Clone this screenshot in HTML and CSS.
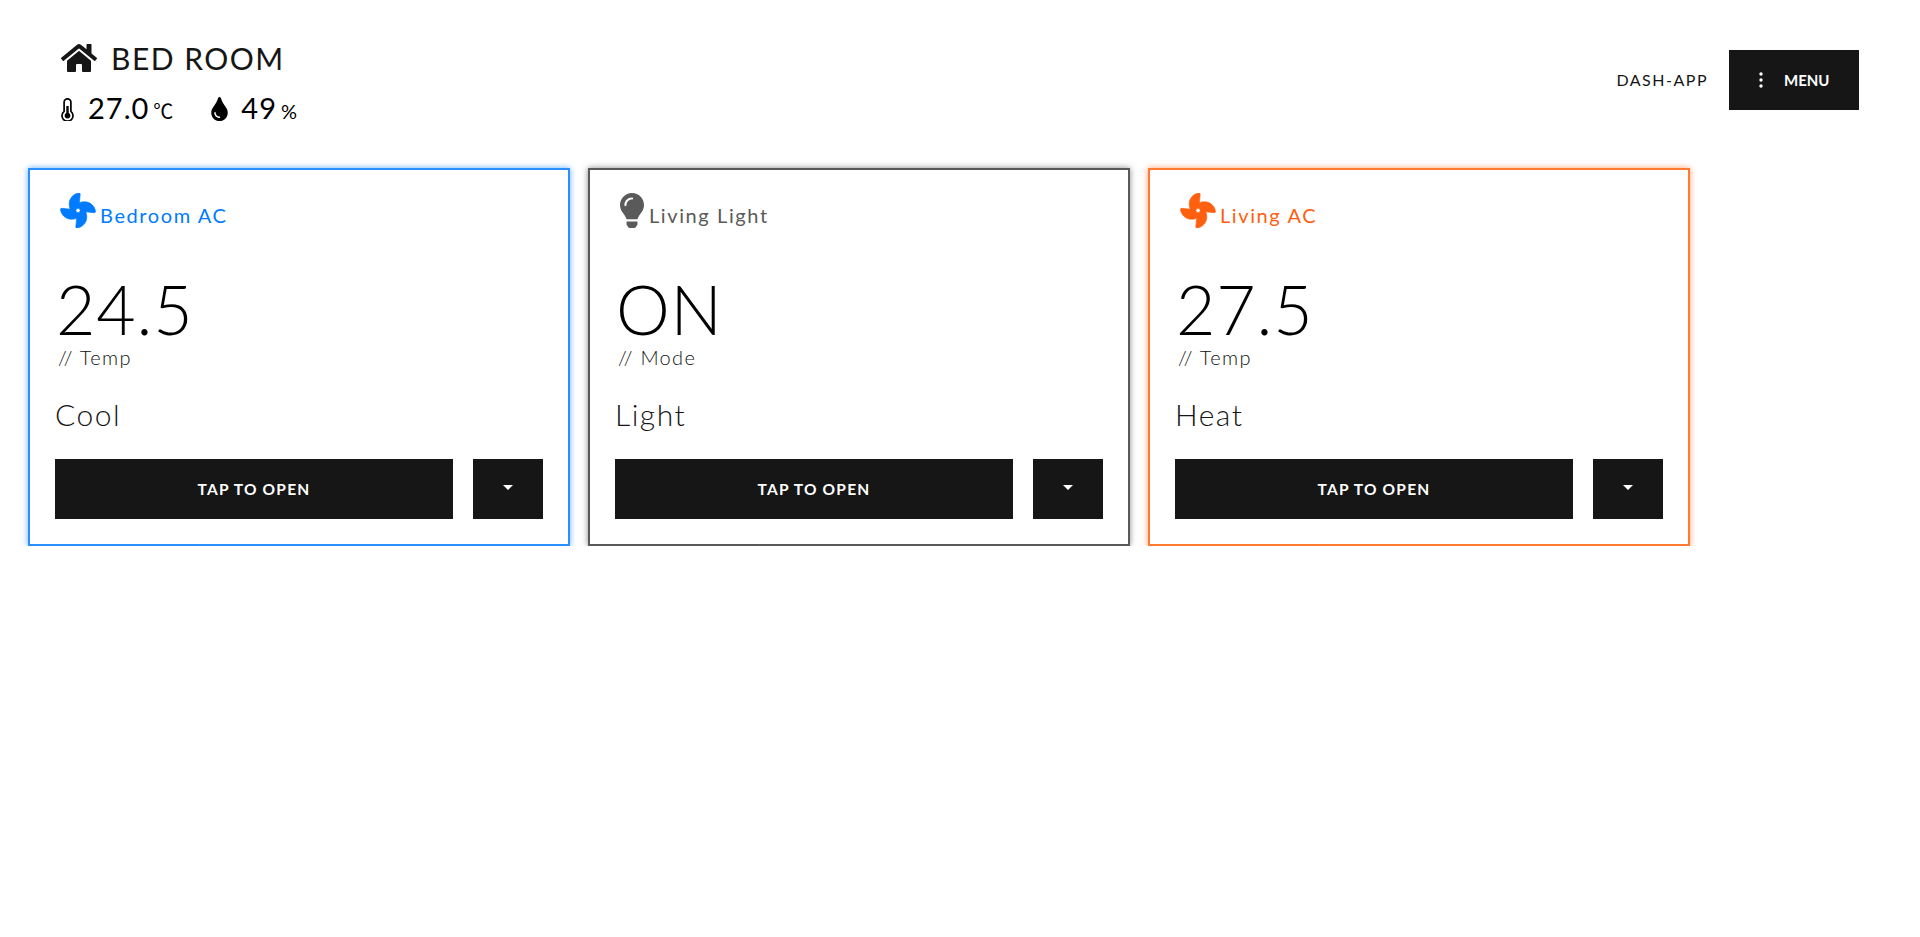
FILE: index.html
```html
<!DOCTYPE html>
<html lang="en">
<head>
  <meta charset="UTF-8" />
  <meta name="viewport" content="width=device-width, initial-scale=1.0"/>
  <title>Bed Room - Dash App</title>
  <link rel="stylesheet" href="styles.css">
</head>
<body>
  <svg class="icon-defs" width="0" height="0" aria-hidden="true">
    <symbol id="icon-fan" viewBox="0 0 512 512">
      <path stroke="currentColor" stroke-width="10" d="M352.57 128c-28.09 0-54.09 4.52-77.06 12.86l12.41-123.11C289 7.31 279.81-1.18 269.33.13 189.63 10.13 128 77.64 128 159.43c0 28.09 4.52 54.09 12.86 77.06L17.75 224.08C7.31 223-1.18 232.19.13 242.67c10 79.7 77.51 141.33 159.3 141.33 28.09 0 54.09-4.52 77.06-12.86l-12.41 123.11c-1.05 10.43 8.11 18.93 18.59 17.62 79.7-10 141.33-77.51 141.33-159.3 0-28.09-4.52-54.09-12.86-77.06l123.11 12.41c10.44 1.05 18.93-8.11 17.62-18.59-10-79.7-77.51-141.33-159.3-141.33zM256 288a32 32 0 1 1 0-64 32 32 0 0 1 0 64z"/>
    </symbol>
    <symbol id="icon-bulb" viewBox="0 0 352 512">
      <path d="M96.06 454.35c.01 6.29 1.87 12.45 5.36 17.69l17.09 25.69a31.99 31.99 0 0 0 26.64 14.28h61.71a31.99 31.99 0 0 0 26.64-14.28l17.09-25.69a31.989 31.989 0 0 0 5.36-17.69l.04-38.35H96.01l.05 38.35zM0 176c0 44.37 16.45 84.85 43.56 115.78 16.52 18.85 42.36 58.23 52.21 91.45.04.26.07.52.11.78h160.24c.04-.26.07-.51.11-.78 9.85-33.22 35.69-72.6 52.21-91.45C335.55 260.85 352 220.37 352 176 352 78.61 272.91-.3 175.45 0 73.44.31 0 82.97 0 176zm176-80c-44.11 0-80 35.89-80 80 0 8.84-7.16 16-16 16s-16-7.16-16-16c0-61.76 50.24-112 112-112 8.84 0 16 7.16 16 16s-7.16 16-16 16z"/>
    </symbol>
  </svg>

  <div class="header">
    <div class="room">
      <h1 class="room-title">
        <svg class="icon-home" viewBox="0 0 576 512"><path d="M280.37 148.26L96 300.11V464a16 16 0 0 0 16 16l112.06-.29a16 16 0 0 0 15.92-16V368a16 16 0 0 1 16-16h64a16 16 0 0 1 16 16v95.64a16 16 0 0 0 16 16.05L464 480a16 16 0 0 0 16-16V300L295.67 148.26a12.19 12.19 0 0 0-15.3 0zM571.6 251.47L488 182.56V44.05a12 12 0 0 0-12-12h-56a12 12 0 0 0-12 12v72.61L318.47 43a48 48 0 0 0-61 0L4.34 251.47a12 12 0 0 0-1.6 16.9l25.5 31A12 12 0 0 0 45.15 301l235.22-193.74a12.19 12.19 0 0 1 15.3 0L530.9 301a12 12 0 0 0 16.9-1.6l25.5-31a12 12 0 0 0-1.7-16.93z"/></svg>
        BED ROOM
      </h1>
      <div class="room-stats">
        <div class="stat stat-temp">
          <svg class="icon-thermo" viewBox="0 0 13 23">
            <path class="thermo-outline" d="M3.1 13.4V4.2a3.4 3.4 0 0 1 6.8 0v9.2a5.5 5.5 0 1 1-6.8 0z"/>
            <path d="M5.3 8h2.4v7a2.9 2.9 0 1 1-2.4 0z"/>
          </svg>
          <span class="stat-value">27.0</span>
          <span class="stat-unit">℃</span>
        </div>
        <div class="stat">
          <svg class="icon-drop" viewBox="0 0 352 512"><path d="M205.22 22.09c-7.94-28.78-49.44-30.12-58.44 0C100.01 179.85 0 222.72 0 333.91 0 432.35 78.72 512 176 512s176-79.65 176-178.09c0-111.75-99.79-153.34-146.78-311.82zM176 448c-61.75 0-112-50.25-112-112 0-8.84 7.16-16 16-16s16 7.16 16 16c0 44.11 35.89 80 80 80 8.84 0 16 7.16 16 16s-7.16 16-16 16z"/></svg>
          <span class="stat-value">49</span>
          <span class="stat-unit">%</span>
        </div>
      </div>
    </div>
    <div class="nav">
      <span class="nav-label">DASH-APP</span>
      <button class="btn btn-menu">
        <svg class="icon-dots" viewBox="0 0 4 16"><circle cx="2" cy="2" r="1.7"/><circle cx="2" cy="8" r="1.7"/><circle cx="2" cy="14" r="1.7"/></svg>
        MENU
      </button>
    </div>
  </div>

  <div class="cards">
    <div class="card card-blue">
      <div class="card-title">
        <svg class="icon-fan"><use href="#icon-fan"/></svg>
        <span>Bedroom AC</span>
      </div>
      <div class="card-value">24.5</div>
      <div class="card-kind">// Temp</div>
      <div class="card-mode">Cool</div>
      <div class="card-actions">
        <button class="btn btn-open">TAP TO OPEN</button>
        <button class="btn btn-more"><span class="caret"></span></button>
      </div>
    </div>

    <div class="card card-gray">
      <div class="card-title">
        <svg class="icon-bulb"><use href="#icon-bulb"/></svg>
        <span>Living Light</span>
      </div>
      <div class="card-value">ON</div>
      <div class="card-kind">// Mode</div>
      <div class="card-mode">Light</div>
      <div class="card-actions">
        <button class="btn btn-open">TAP TO OPEN</button>
        <button class="btn btn-more"><span class="caret"></span></button>
      </div>
    </div>

    <div class="card card-orange">
      <div class="card-title">
        <svg class="icon-fan"><use href="#icon-fan"/></svg>
        <span>Living AC</span>
      </div>
      <div class="card-value">27.5</div>
      <div class="card-kind">// Temp</div>
      <div class="card-mode">Heat</div>
      <div class="card-actions">
        <button class="btn btn-open">TAP TO OPEN</button>
        <button class="btn btn-more"><span class="caret"></span></button>
      </div>
    </div>
  </div>
</body>
</html>
```

FILE: styles.css
```css
body {
  font-family: 'Lato', 'Noto Sans CJK SC', sans-serif;
  background-color: white;
  color: #161616;
  margin: 0;
  padding: 0;
  overflow-x: hidden;
}

.icon-defs {
  position: absolute;
}

svg {
  fill: currentColor;
  flex-shrink: 0;
}

/* top bar */
.header {
  display: flex;
  justify-content: space-between;
  align-items: flex-start;
  padding: 40px 61px 0 61px;
  height: 168px;
  box-sizing: border-box;
}

.room-title {
  display: flex;
  align-items: center;
  gap: 14px;
  margin: 0;
  height: 36px;
  font-size: 30px;
  font-weight: 400;
  letter-spacing: 1.5px;
}

.icon-home {
  width: 36px;
  height: 32px;
}

.room-stats {
  display: flex;
  gap: 38px;
  margin-top: 17px;
  color: #000;
}

.stat {
  display: flex;
  align-items: baseline;
}

.icon-thermo {
  width: 13px;
  height: 23px;
  margin-right: 14px;
  align-self: center;
}

.thermo-outline {
  fill: none;
  stroke: currentColor;
  stroke-width: 1.7;
}

.icon-drop {
  width: 17px;
  height: 24px;
  margin-right: 13px;
  align-self: center;
}

.stat-value {
  font-size: 29px;
  line-height: 30px;
  letter-spacing: 1px;
}

.stat-unit {
  font-size: 20px;
  margin-left: 4px;
}

.nav {
  display: flex;
  align-items: center;
  gap: 21px;
  margin-top: 10px;
}

.nav-label {
  padding-bottom: 2px;
  font-size: 16px;
  letter-spacing: 1.5px;
}

.btn {
  background-color: #161616;
  color: white;
  font-family: inherit;
  font-weight: 700;
  border: none;
  cursor: pointer;
}

.btn-menu {
  display: flex;
  align-items: center;
  width: 130px;
  height: 60px;
  padding: 0 0 0 30px;
  gap: 21px;
  font-size: 15px;
}

.icon-dots {
  width: 4px;
  height: 16px;
}

/* device cards */
.cards {
  display: flex;
  gap: 18px;
  padding-left: 28px;
}

.card {
  width: 542px;
  height: 378px;
  box-sizing: border-box;
  border: 2px solid;
  background-color: white;
  padding: 22px 25px 0 25px;
}

.card-blue {
  color: #007bff;
  border-color: #2a8fff;
  box-shadow: 0 0 6px rgba(0, 123, 255, 0.6);
}

.card-gray {
  color: #5a5a5a;
  border-color: #5a5a5a;
  box-shadow: 0 0 6px rgba(60, 60, 60, 0.6);
}

.card-orange {
  color: #ff6010;
  border-color: #ff7a33;
  box-shadow: 0 0 6px rgba(255, 96, 16, 0.6);
}

.card-title {
  display: flex;
  align-items: flex-end;
  height: 36px;
  padding-left: 5px;
  font-size: 20px;
  line-height: 26px;
  letter-spacing: 1.6px;
}

.icon-fan {
  width: 36px;
  height: 35px;
  margin-right: 4px;
}

.icon-bulb {
  width: 24px;
  height: 35px;
  margin-right: 5px;
}

.card-value {
  margin-top: 44px;
  padding-left: 1px;
  font-size: 68px;
  font-weight: 300;
  line-height: 74px;
  letter-spacing: 0.8px;
  color: black;
}

.card-kind {
  padding-left: 3px;
  font-size: 20px;
  font-weight: 300;
  line-height: 22px;
  letter-spacing: 1.3px;
  color: #111;
}

.card-mode {
  margin-top: 28px;
  font-size: 30px;
  font-weight: 300;
  line-height: 36px;
  letter-spacing: 1.5px;
  color: #161616;
}

.card-actions {
  display: flex;
  gap: 20px;
  margin-top: 27px;
}

.btn-open {
  width: 398px;
  height: 60px;
  padding-bottom: 2px;
  font-size: 15.5px;
  letter-spacing: 1.2px;
}

.btn-more {
  display: flex;
  align-items: center;
  justify-content: center;
  width: 70px;
  height: 60px;
  padding: 0;
}

.caret {
  width: 0;
  height: 0;
  margin-bottom: 3px;
  border-left: 5px solid transparent;
  border-right: 5px solid transparent;
  border-top: 5px solid white;
}
```
